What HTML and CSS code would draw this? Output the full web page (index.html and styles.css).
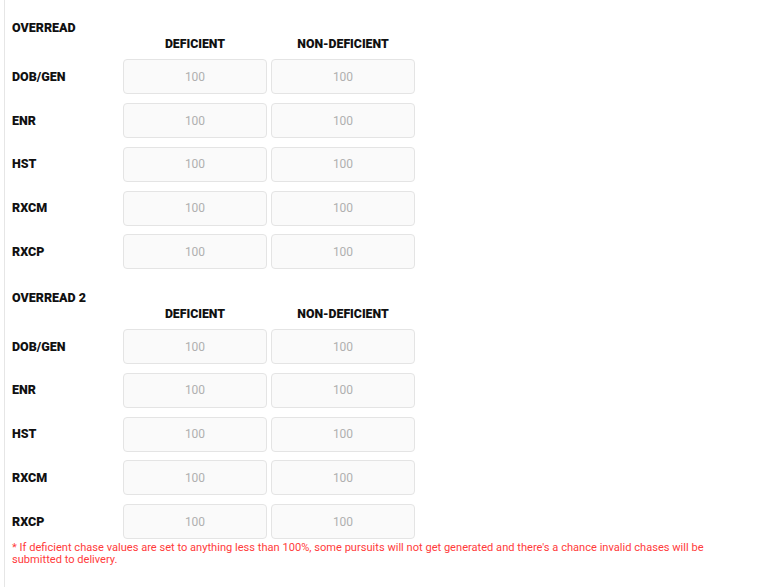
FILE: index.html
```html
<!DOCTYPE html>
<html>
<head>
<meta charset="utf-8">
<link rel="stylesheet" href="styles.css">
</head>
<body>
<div class="panel">
  <section class="group">
    <div class="group-title">OVERREAD</div>
    <div class="grid">
      <div class="head-spacer"></div><div class="col-head">DEFICIENT</div><div class="col-head">NON-DEFICIENT</div>
      <div class="label">DOB/GEN</div><input class="field" placeholder="100"><input class="field" placeholder="100">
      <div class="label">ENR</div><input class="field" placeholder="100"><input class="field" placeholder="100">
      <div class="label">HST</div><input class="field" placeholder="100"><input class="field" placeholder="100">
      <div class="label">RXCM</div><input class="field" placeholder="100"><input class="field" placeholder="100">
      <div class="label">RXCP</div><input class="field" placeholder="100"><input class="field" placeholder="100">
    </div>
  </section>
  <section class="group group-second">
    <div class="group-title">OVERREAD 2</div>
    <div class="grid">
      <div class="head-spacer"></div><div class="col-head">DEFICIENT</div><div class="col-head">NON-DEFICIENT</div>
      <div class="label">DOB/GEN</div><input class="field" placeholder="100"><input class="field" placeholder="100">
      <div class="label">ENR</div><input class="field" placeholder="100"><input class="field" placeholder="100">
      <div class="label">HST</div><input class="field" placeholder="100"><input class="field" placeholder="100">
      <div class="label">RXCM</div><input class="field" placeholder="100"><input class="field" placeholder="100">
      <div class="label">RXCP</div><input class="field" placeholder="100"><input class="field" placeholder="100">
    </div>
  </section>
  <p class="note">* If deficient chase values are set to anything less than 100%, some pursuits will not get generated and there's a chance invalid chases will be submitted to delivery.</p>
</div>
</body>
</html>
```

FILE: styles.css
```css
html, body {
  margin: 0;
  padding: 0;
  background: #ffffff;
}
body {
  font-family: Roboto, "Liberation Sans", Arial, sans-serif;
  color: #111;
}
.panel {
  margin-left: 4px;
  border-left: 1px solid #e6e6e6;
  padding: 20px 40px 0 7px;
  min-height: 567px;
}
.group-second {
  margin-top: 20.5px;
}
.group-title {
  font-size: 12.5px;
  font-weight: 900;
  line-height: 14px;
  color: #111;
  padding-top: 1px;
}
.grid {
  display: grid;
  grid-template-columns: 107px 144px 144px;
  column-gap: 4px;
  row-gap: 8.75px;
  align-items: center;
  margin-top: 1.5px;
}
.col-head {
  font-size: 12.3px;
  font-weight: 900;
  line-height: 14px;
  text-align: center;
  color: #111;
  margin-bottom: -1.75px;
}
.head-spacer {
  height: 14px;
}
.label {
  font-size: 12.5px;
  font-weight: 900;
  line-height: 14px;
  color: #111;
}
.field {
  box-sizing: border-box;
  width: 144px;
  height: 35px;
  margin: 0;
  border: 1px solid #e4e4e4;
  border-radius: 4px;
  background: #fafafa;
  font-family: Roboto, "Liberation Sans", Arial, sans-serif;
  font-size: 12px;
  text-align: center;
  color: #333;
  outline: none;
  padding: 0;
}
.field::placeholder {
  color: #b0b0b0;
}
.note {
  margin: 3px 0 0;
  font-size: 11.1px;
  line-height: 12px;
  color: #ff3b3b;
}
```
